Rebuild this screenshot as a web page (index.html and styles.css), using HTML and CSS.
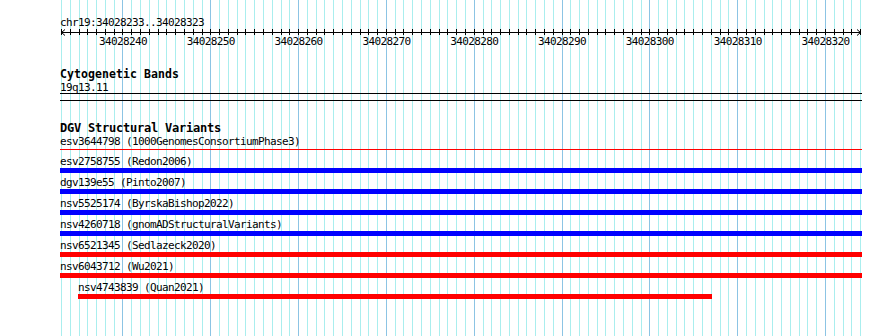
FILE: index.html
```html
<!DOCTYPE html>
<html lang="en">

<head>
    <meta charset="UTF-8">
    <title>chr19:34028233..34028323</title>
    <link rel="stylesheet" href="styles.css">
</head>

<body>
    <div class="view">
        <!-- one cell per base, every 10th line is darker and carries the coordinate -->
        <div class="grid">
            <span></span><span></span><span></span><span></span><span></span><span></span><span></span>
            <span class="major"><b>34028240</b></span>
            <span></span><span></span><span></span><span></span><span></span><span></span><span></span><span></span><span></span>
            <span class="major"><b>34028250</b></span>
            <span></span><span></span><span></span><span></span><span></span><span></span><span></span><span></span><span></span>
            <span class="major"><b>34028260</b></span>
            <span></span><span></span><span></span><span></span><span></span><span></span><span></span><span></span><span></span>
            <span class="major"><b>34028270</b></span>
            <span></span><span></span><span></span><span></span><span></span><span></span><span></span><span></span><span></span>
            <span class="major"><b>34028280</b></span>
            <span></span><span></span><span></span><span></span><span></span><span></span><span></span><span></span><span></span>
            <span class="major"><b>34028290</b></span>
            <span></span><span></span><span></span><span></span><span></span><span></span><span></span><span></span><span></span>
            <span class="major"><b>34028300</b></span>
            <span></span><span></span><span></span><span></span><span></span><span></span><span></span><span></span><span></span>
            <span class="major"><b>34028310</b></span>
            <span></span><span></span><span></span><span></span><span></span><span></span><span></span><span></span><span></span>
            <span class="major"><b>34028320</b></span>
            <span></span><span></span><span></span>
        </div>

        <div class="tracks">
            <div class="ruler">
                <div class="locus">chr19:34028233..34028323</div>
                <svg class="axis" width="802" height="7" viewBox="0 0 802 7">
                    <path d="M1 3.5H801" stroke="#000" stroke-width="1" fill="none" />
                    <path d="M5 0.5L1.5 3.5L5 6.5M797 0.5L800.5 3.5L797 6.5" stroke="#000" stroke-width="1" fill="none" />
                </svg>
            </div>

            <div class="track cyto">
                <div class="track-title">Cytogenetic Bands</div>
                <div class="band-name">19q13.11</div>
                <div class="band-box"></div>
            </div>

            <div class="track dgv">
                <div class="track-title">DGV Structural Variants</div>

                <div class="feature thin">
                    <div class="feature-label">esv3644798 (1000GenomesConsortiumPhase3)</div>
                    <div class="feature-bar red"></div>
                </div>
                <div class="feature">
                    <div class="feature-label">esv2758755 (Redon2006)</div>
                    <div class="feature-bar blue"></div>
                </div>
                <div class="feature">
                    <div class="feature-label">dgv139e55 (Pinto2007)</div>
                    <div class="feature-bar blue"></div>
                </div>
                <div class="feature">
                    <div class="feature-label">nsv5525174 (ByrskaBishop2022)</div>
                    <div class="feature-bar blue"></div>
                </div>
                <div class="feature">
                    <div class="feature-label">nsv4260718 (gnomADStructuralVariants)</div>
                    <div class="feature-bar blue"></div>
                </div>
                <div class="feature">
                    <div class="feature-label">nsv6521345 (Sedlazeck2020)</div>
                    <div class="feature-bar red"></div>
                </div>
                <div class="feature">
                    <div class="feature-label">nsv6043712 (Wu2021)</div>
                    <div class="feature-bar red"></div>
                </div>
                <div class="feature" style="margin-left: 18px;">
                    <div class="feature-label">nsv4743839 (Quan2021)</div>
                    <div class="feature-bar red" style="width: 634px;"></div>
                </div>
            </div>
        </div>
    </div>
</body>

</html>
```

FILE: styles.css
```css
body {
    margin: 0;
    padding: 0;
    background-color: #fff;
    color: #000;
    font-family: "DejaVu Sans Mono", "Liberation Mono", monospace;
    font-size: 11px;
    letter-spacing: -0.62px;
}

.view {
    position: relative;
    width: 890px;
    height: 336px;
    overflow: hidden;
}

/* base grid behind the tracks */
.grid {
    position: absolute;
    top: 0;
    bottom: 0;
    left: 61px;
    width: 799px;
    display: flex;
    border-right: 1px solid #aaeeee;
}

.grid span {
    flex: 1;
    position: relative;
    border-left: 1px solid #aaeeee;
}

.grid span.major {
    border-left-color: #8cc4e4;
}

/* ruler ticks sit on the grid lines */
.grid span::before,
.grid::after {
    content: "";
    position: absolute;
    top: 29px;
    left: -1px;
    width: 1px;
    height: 6px;
    background-color: #000;
}

.grid::after {
    left: auto;
    right: -1px;
}

.grid b {
    position: absolute;
    z-index: 1;
    top: 35px;
    left: -0.5px;
    transform: translateX(-50%);
    font-weight: normal;
    line-height: 13px;
    white-space: nowrap;
}

.tracks {
    position: relative;
    z-index: 2;
    width: 802px;
    padding-left: 60px;
}

.ruler {
    box-sizing: border-box;
    height: 49px;
    padding-top: 16px;
}

.locus {
    line-height: 13px;
}

.axis {
    display: block;
}

.track-title {
    font-weight: bold;
    font-size: 12px;
    letter-spacing: -0.22px;
}

.cyto {
    margin-top: 19px;
}

.cyto .track-title {
    font-size: 11.5px;
    letter-spacing: 0.08px;
    line-height: 12px;
}

.band-name {
    margin-top: 1px;
    line-height: 13px;
}

.band-box {
    height: 6px;
    margin-top: -1px;
    border-top: 1px solid #000;
    border-bottom: 1px solid #000;
}

.dgv {
    margin-top: 21px;
}

.dgv .track-title {
    line-height: 13px;
}

.feature-label {
    line-height: 13px;
    white-space: nowrap;
}

.feature-bar {
    height: 5px;
    margin-bottom: 3px;
}

.feature.thin .feature-bar {
    height: 1px;
    margin-top: 1px;
    margin-bottom: 5px;
}

.blue {
    background-color: #0000ff;
}

.red {
    background-color: #ff0000;
}
```
